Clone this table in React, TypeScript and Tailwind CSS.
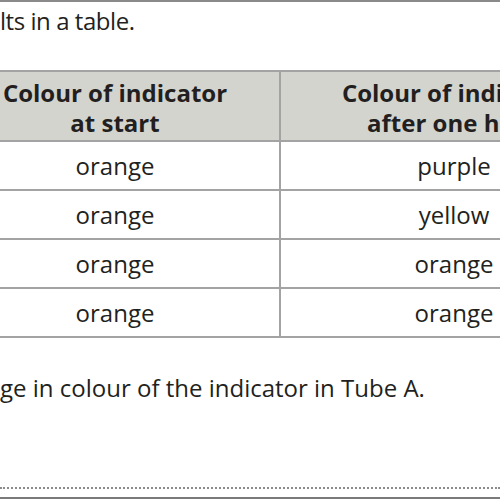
import React from "react";

const rows = [
  ["orange", "purple"],
  ["orange", "yellow"],
  ["orange", "orange"],
  ["orange", "orange"],
];

export default function App() {
  return (
    <div
      className="w-[500px] h-[500px] overflow-hidden bg-white text-[#231f20]"
      style={{ fontFamily: '"Open Sans", "Noto Sans", sans-serif' }}
    >
      <div className="h-[2px] bg-[#8a8a8a]" />
      <div className="mt-[7px] h-[24px] text-[24px] leading-none tracking-[-0.45px] whitespace-nowrap">
        lts in a table.
      </div>
      <div className="mt-[37px] ml-[-49px] w-[700px]">
        <div className="grid grid-cols-[328px_348px] border-t-2 border-[#a3a3a3] bg-[#d4d4cf]">
          <div className="h-[70px] pt-[3px] flex flex-col items-center justify-center font-bold text-[24px] leading-[30px] border-b-2 border-[#a3a3a3] whitespace-nowrap">
            <span>Colour of indicator</span>
            <span>at start</span>
          </div>
          <div className="h-[70px] pt-[3px] flex flex-col items-center justify-center font-bold text-[24px] leading-[30px] border-b-2 border-l-2 border-[#a3a3a3] whitespace-nowrap">
            <span>Colour of indicator</span>
            <span>after one hour</span>
          </div>
        </div>
        {rows.map((r, i) => (
          <div key={i} className="grid grid-cols-[328px_348px] bg-white">
            <div className="h-[49px] pt-[1px] flex items-center justify-center text-[24px] border-b-2 border-[#a3a3a3]">
              {r[0]}
            </div>
            <div className="h-[49px] pt-[1px] flex items-center justify-center text-[24px] border-b-2 border-l-2 border-[#a3a3a3]">
              {r[1]}
            </div>
          </div>
        ))}
      </div>
      <div className="mt-[38px] h-[24px] text-[24px] leading-none whitespace-nowrap">
        ge in colour of the indicator in Tube A.
      </div>
      <div className="mt-[87px] border-b-2 border-dotted border-[#8c8c8c]" />
      <div className="mt-[8px] h-[2px] bg-[#7a7a7a]" />
    </div>
  );
}
